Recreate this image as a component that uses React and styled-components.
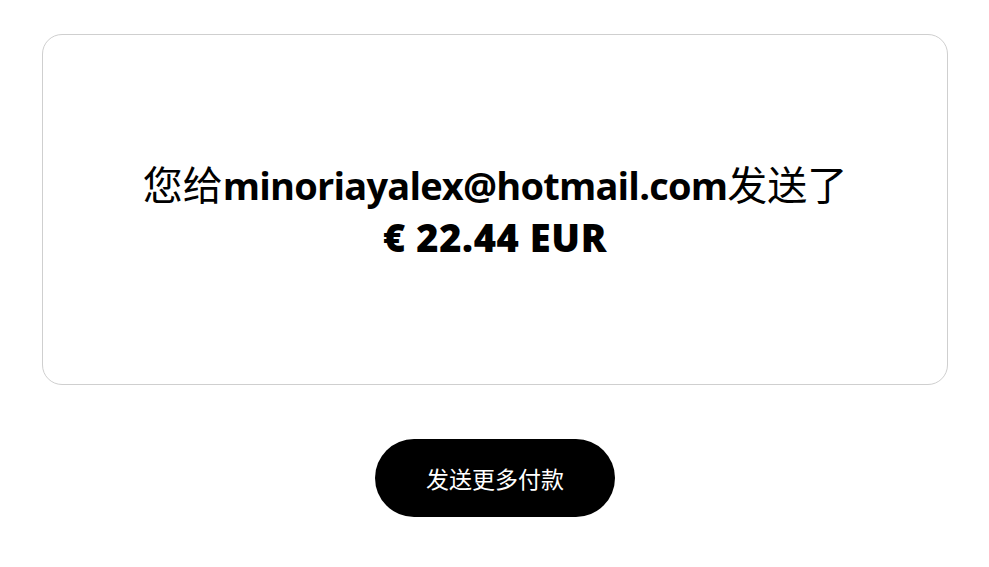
import React from "react";
import styled, { createGlobalStyle } from "styled-components";

const Global = createGlobalStyle`
  html, body { margin: 0; padding: 0; background: #fff; }
  body { font-family: "Open Sans", "Noto Sans CJK SC", sans-serif; color: #000; }
`;

const Page = styled.main`
  display: flex;
  flex-direction: column;
  align-items: center;
  padding: 34px 41px 0 42px;
  gap: 54px;
`;

const Card = styled.section`
  box-sizing: border-box;
  width: 100%;
  height: 351px;
  border: 1px solid #cfcfcf;
  border-radius: 20px;
  display: flex;
  flex-direction: column;
  align-items: center;
  justify-content: center;
  text-align: center;
`;

const Line = styled.div`
  font-size: 38px;
  line-height: 52px;
  white-space: nowrap;
`;

const Cjk = styled.span`
  font-family: "Noto Sans CJK SC", sans-serif;
  font-size: 40px;
  font-weight: 400;
`;

const Strong = styled.span`
  font-family: "Open Sans", sans-serif;
  font-weight: ${(p) => p.$weight || 700};
  letter-spacing: ${(p) => p.$ls || "0px"};
`;

const Button = styled.button`
  width: 240px;
  height: 78px;
  border: none;
  border-radius: 39px;
  background: #000;
  color: #fff;
  font-family: "Noto Sans CJK SC", sans-serif;
  font-size: 23px;
  cursor: pointer;
`;

export default function App() {
  return (
    <>
      <Global />
      <Page>
        <Card>
          <Line>
            <Cjk>您给</Cjk>
            <Strong $ls="-0.8px">minoriayalex@hotmail.com</Strong>
            <Cjk>发送了</Cjk>
          </Line>
          <Line>
            <Strong $weight={800} $ls="0.6px">€ 22.44 EUR</Strong>
          </Line>
        </Card>
        <Button>发送更多付款</Button>
      </Page>
    </>
  );
}
